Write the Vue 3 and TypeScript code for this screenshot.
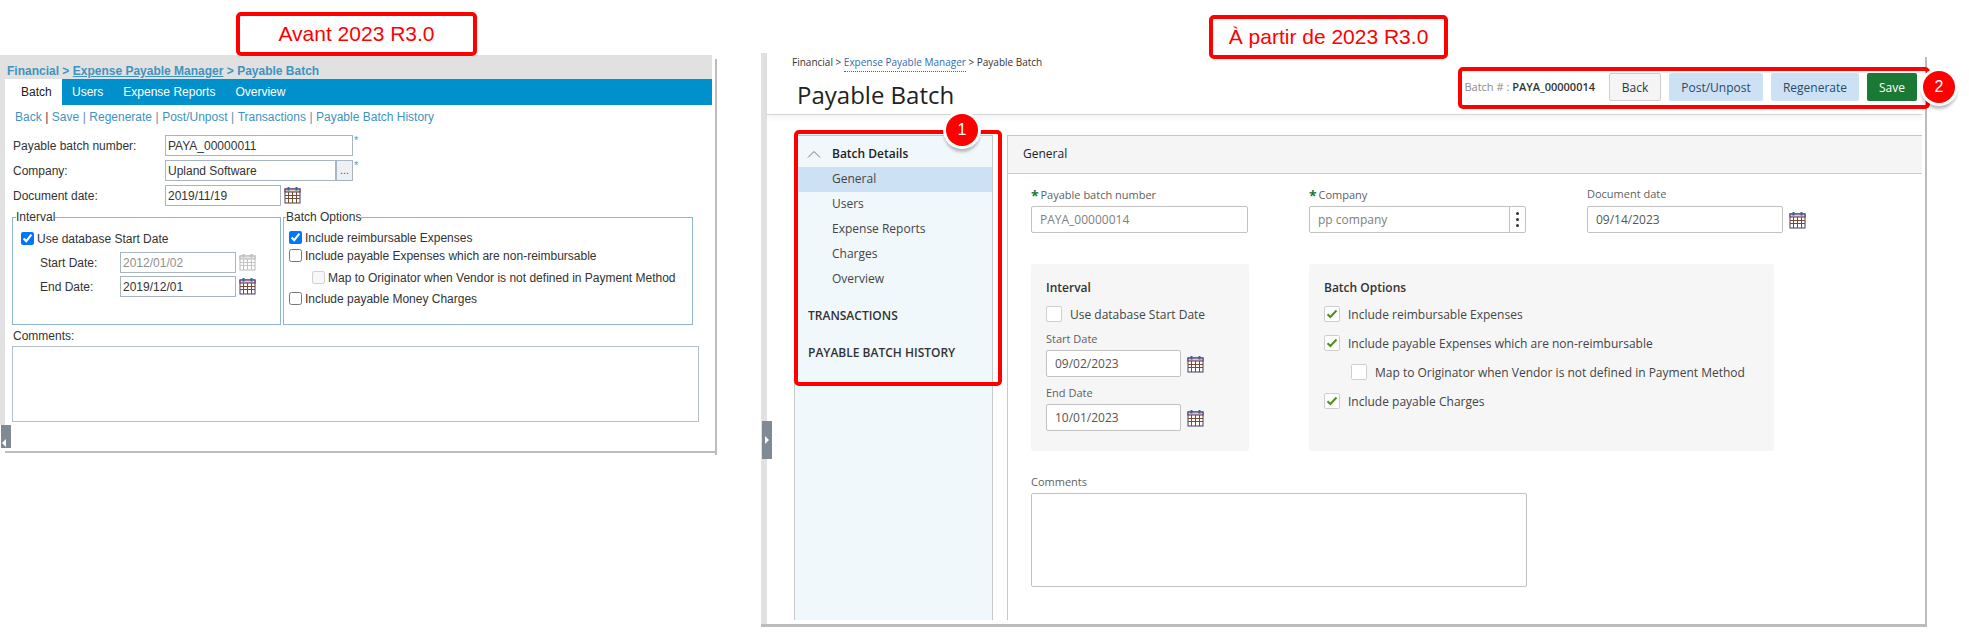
<script setup lang="ts">
const sideItems: string[] = ['General', 'Users', 'Expense Reports', 'Charges', 'Overview']
const oldOptions = [
  { label: 'Include reimbursable Expenses', checked: true },
  { label: 'Include payable Expenses which are non-reimbursable', checked: false },
]
const newOptions = [
  { label: 'Include reimbursable Expenses', checked: true, nested: false },
  { label: 'Include payable Expenses which are non-reimbursable', checked: true, nested: false },
  { label: 'Map to Originator when Vendor is not defined in Payment Method', checked: false, nested: true },
  { label: 'Include payable Charges', checked: true, nested: false },
]
</script>

<template>
  <div class="page">
    <svg class="defs" width="0" height="0" aria-hidden="true">
      <symbol id="cal" viewBox="0 0 17 18">
        <rect x="1" y="3" width="15" height="14" fill="#fff" stroke="#4a3a5a" stroke-width="1" />
        <rect x="1" y="3" width="15" height="3" fill="#d8d0c0" stroke="#5a2a6a" stroke-width="1" />
        <path d="M1 9.5H16M1 12.5H16M4.5 6V17M8.5 6V17M12.5 6V17" stroke="#7a4a30" stroke-width="1" fill="none" />
        <rect x="3.5" y="1" width="2" height="3.5" fill="#2a6a9a" />
        <rect x="11.5" y="1" width="2" height="3.5" fill="#2a6a9a" />
      </symbol>
      <symbol id="calgrey" viewBox="0 0 17 18">
        <rect x="1" y="3" width="15" height="14" fill="#fff" stroke="#b8b8b8" stroke-width="1" />
        <rect x="1" y="3" width="15" height="3" fill="#e8e8e8" stroke="#b8b8b8" stroke-width="1" />
        <path d="M1 9.5H16M1 12.5H16M4.5 6V17M8.5 6V17M12.5 6V17" stroke="#c4c4c4" stroke-width="1" fill="none" />
        <rect x="3.5" y="1" width="2" height="3.5" fill="#c0c0c0" />
        <rect x="11.5" y="1" width="2" height="3.5" fill="#c0c0c0" />
      </symbol>
    </svg>

    <!-- Before -->
    <section class="old">
      <div class="old-crumb">
        Financial &gt; <a class="old-crumb-link">Expense Payable Manager</a> &gt; Payable Batch
      </div>
      <div class="old-body">
        <div class="old-strip"></div>
        <div class="old-main">
          <nav class="old-tabs">
            <span class="old-tab active">Batch</span>
            <span class="old-tab">Users</span>
            <span class="old-tab">Expense Reports</span>
            <span class="old-tab">Overview</span>
          </nav>
          <div class="old-links">
            <a>Back</a><i class="dark">|</i><a>Save</a><i>|</i><a>Regenerate</a><i>|</i><a>Post/Unpost</a><i>|</i><a>Transactions</a><i>|</i><a>Payable Batch History</a>
          </div>
          <div class="old-form">
            <div class="old-row">
              <label class="old-label">Payable batch number:</label>
              <div class="old-input w188">PAYA_00000011</div>
              <span class="old-star">*</span>
            </div>
            <div class="old-row">
              <label class="old-label">Company:</label>
              <div class="old-input w171">Upland Software</div>
              <div class="old-more">...</div>
              <span class="old-star">*</span>
            </div>
            <div class="old-row">
              <label class="old-label">Document date:</label>
              <div class="old-input w116">2019/11/19</div>
              <svg class="old-cal"><use href="#cal" /></svg>
            </div>
            <div class="old-sets">
              <fieldset class="old-set interval">
                <legend>Interval</legend>
                <div class="set-in pad8">
                  <div class="old-check first">
                    <input type="checkbox" checked />
                    <span>Use database Start Date</span>
                  </div>
                  <div class="old-date first-date">
                    <label>Start Date:</label>
                    <div class="old-input w116 muted">2012/01/02</div>
                    <svg class="old-cal"><use href="#calgrey" /></svg>
                  </div>
                  <div class="old-date">
                    <label>End Date:</label>
                    <div class="old-input w116">2019/12/01</div>
                    <svg class="old-cal"><use href="#cal" /></svg>
                  </div>
                </div>
              </fieldset>
              <fieldset class="old-set options">
                <legend>Batch Options</legend>
                <div class="set-in pad5">
                  <div class="old-check tight" v-for="o in oldOptions" :key="o.label">
                    <input type="checkbox" :checked="o.checked" />
                    <span>{{ o.label }}</span>
                  </div>
                  <div class="old-check nested">
                    <input type="checkbox" disabled />
                    <span>Map to Originator when Vendor is not defined in Payment Method</span>
                  </div>
                  <div class="old-check last">
                    <input type="checkbox" />
                    <span>Include payable Money Charges</span>
                  </div>
                </div>
              </fieldset>
            </div>
            <div class="old-comments">Comments:</div>
            <textarea class="old-area"></textarea>
          </div>
        </div>
      </div>
      <div class="old-handle"><span></span></div>
    </section>

    <!-- After -->
    <section class="new">
      <div class="new-strip"></div>
      <div class="new-main">
        <header class="new-head">
          <div class="new-head-left">
            <div class="new-crumb">Financial &gt; <a>Expense Payable Manager</a> &gt; Payable Batch</div>
            <h1>Payable Batch</h1>
          </div>
          <div class="toolbar">
            <span class="batch-no">Batch # : <b>PAYA_00000014</b></span>
            <button class="btn plain">Back</button>
            <button class="btn soft b94">Post/Unpost</button>
            <button class="btn soft b88">Regenerate</button>
            <button class="btn save">Save</button>
          </div>
        </header>
        <div class="new-body">
          <aside class="side">
            <div class="side-top">
              <svg class="chev" width="14" height="8" viewBox="0 0 14 8"><path d="M1 7.5L7 1.5L13 7.5" fill="none" stroke="#777" stroke-width="1" /></svg>
              <span>Batch Details</span>
            </div>
            <div v-for="(s, i) in sideItems" :key="s" class="side-item" :class="{ on: i === 0 }">{{ s }}</div>
            <div class="side-cap first">TRANSACTIONS</div>
            <div class="side-cap">PAYABLE BATCH HISTORY</div>
          </aside>
          <div class="content">
            <div class="content-head">General</div>
            <div class="content-form">
              <div class="top-row">
                <div class="cell">
                  <div class="lab"><em>*</em> Payable batch number</div>
                  <div class="inp w217 dim">PAYA_00000014</div>
                </div>
                <div class="cell">
                  <div class="lab"><em>*</em> Company</div>
                  <div class="inp w217 dim split">
                    <span class="split-val">pp company</span>
                    <span class="dots"><i></i><i></i><i></i></span>
                  </div>
                </div>
                <div class="cell">
                  <div class="lab">Document date</div>
                  <div class="with-cal">
                    <div class="inp w196">09/14/2023</div>
                    <svg class="new-cal"><use href="#cal" /></svg>
                  </div>
                </div>
              </div>
              <div class="panels">
                <div class="panel interval-p">
                  <div class="panel-title">Interval</div>
                  <div class="chk">
                    <span class="box"></span>
                    <span class="chk-text">Use database Start Date</span>
                  </div>
                  <div class="lab date-lab">Start Date</div>
                  <div class="with-cal">
                    <div class="inp w135">09/02/2023</div>
                    <svg class="new-cal"><use href="#cal" /></svg>
                  </div>
                  <div class="lab date-lab second">End Date</div>
                  <div class="with-cal">
                    <div class="inp w135">10/01/2023</div>
                    <svg class="new-cal"><use href="#cal" /></svg>
                  </div>
                </div>
                <div class="panel options-p">
                  <div class="panel-title">Batch Options</div>
                  <div class="opt-list">
                    <div v-for="o in newOptions" :key="o.label" class="chk" :class="{ nest: o.nested }">
                      <span class="box">
                        <svg v-if="o.checked" width="12" height="10" viewBox="0 0 12 10"><path d="M1.5 5.2L4.4 8L10.5 1.5" fill="none" stroke="#4f8f1d" stroke-width="2" /></svg>
                      </span>
                      <span class="chk-text">{{ o.label }}</span>
                    </div>
                  </div>
                </div>
              </div>
              <div class="lab comments-lab">Comments</div>
              <textarea class="new-area"></textarea>
            </div>
          </div>
        </div>
      </div>
      <div class="new-handle"><span></span></div>
    </section>

    <!-- Annotations laid over the screenshots -->
    <div class="note note-a">Avant 2023 R3.0</div>
    <div class="note note-b">À partir de 2023 R3.0</div>
    <div class="mark mark-side"></div>
    <div class="mark mark-tools"></div>
    <div class="badge badge-1">1</div>
    <div class="badge badge-2">2</div>
  </div>
</template>

<style>
html, body { margin: 0; background: #fff; }
</style>

<style scoped>
* { box-sizing: border-box; }
.page {
  position: relative;
  width: 1969px;
  height: 638px;
  overflow: hidden;
  background: #fff;
  display: flex;
  align-items: flex-start;
}
.defs { position: absolute; }

/* ---------- old ---------- */
.old {
  position: relative;
  width: 718px;
  height: 400px;
  margin-top: 55px;
  font: 12px/14px "Liberation Sans", Arial, sans-serif;
  color: #333;
  flex: none;
}
.old::after {
  content: "";
  position: absolute;
  right: 1px;
  top: 4px;
  bottom: 0;
  width: 2px;
  background: #bcbcbc;
}
.old-crumb {
  width: 712px;
  height: 24px;
  background: #e1e1e1;
  padding: 9px 0 0 7px;
  font-weight: 700;
  color: #3f93c0;
  white-space: nowrap;
}
.old-crumb-link { text-decoration: underline; }
.old-body { display: flex; height: 374px; margin-right: 1px; border-bottom: 2px solid #bcbcbc; margin-left: 5px; }
.old-strip { position: absolute; left: 0; top: 24px; width: 5px; height: 346px; background: #e1e1e1; }
.old-main { flex: 1; min-width: 0; }
.old-tabs {
  width: 707px;
  height: 26px;
  background: #0090cb;
  display: flex;
  color: #fff;
}
.old-tab { padding: 6px 0 0 0; margin-right: 20px; }
.old-tab.active {
  background: #fff;
  color: #222;
  width: 57px;
  padding-left: 16px;
  margin-right: 10px;
}
.old-links {
  height: 30px;
  padding: 5px 0 0 10px;
  color: #3f93c0;
  white-space: nowrap;
}
.old-links i { font-style: normal; color: #6a8fa8; margin: 0 3.5px; }
.old-links i.dark { color: #444; }
.old-form { padding-left: 7px; }
.old-row { display: flex; height: 21px; margin-bottom: 4px; align-items: flex-start; }
.old-label { width: 152px; padding-top: 4px; flex: none; margin-left: 1px; }
.old-input {
  height: 21px;
  border: 1px solid #a9b5c0;
  padding: 3px 0 0 2px;
  flex: none;
  background: #fff;
  color: #333;
  white-space: nowrap;
}
.w188 { width: 188px; }
.w171 { width: 171px; }
.w116 { width: 116px; }
.muted { color: #909090; }
.old-more {
  width: 17px;
  height: 21px;
  border: 1px solid #a9b5c0;
  background: #eef1f4;
  text-align: center;
  font-size: 11px;
  line-height: 18px;
  color: #555;
}
.old-star { color: #4a9fd0; font-size: 11px; line-height: 11px; margin-left: 1px; }
.old-cal { width: 17px; height: 18px; margin-left: 3px; margin-top: 1px; flex: none; }
.old-sets { display: flex; margin-top: 2px; gap: 2px; }
.old-set {
  margin: 0;
  padding: 0;
  height: 115px;
  border: 1px solid #8fb6d0;
  min-width: 0;
  position: relative;
}
.old-set legend { padding: 0; line-height: 14px; }
.interval { width: 269px; }
.interval legend { margin-left: 3px; }
.options { width: 410px; }
.options legend { margin-left: 2px; }
.pad8 { padding-left: 8px; }
.pad5 { padding-left: 5px; }
.old-check { display: flex; align-items: center; height: 14px; white-space: nowrap; }
.old-check input { margin: 0 3px 0 0; width: 13px; height: 13px; flex: none; }
.old-check span { position: relative; top: 1px; }
.old-check.first { margin-top: 7px; }
.old-check.tight { margin-bottom: 4px; }
.old-check.tight:first-of-type { margin-top: 6px; }
.old-check.nested { margin: 8px 0 7px 23px; }
.old-date { display: flex; height: 21px; margin-top: 3px; padding-left: 18px; }
.old-date label { width: 80px; padding-top: 4px; flex: none; margin-left: 1px; }
.first-date { margin-top: 7px; }
.old-comments { margin-top: 4px; padding-left: 1px; height: 17px; }
.old-area {
  display: block;
  width: 687px;
  height: 76px;
  border: 1px solid #b4c0ca;
  border-radius: 0;
  padding: 0;
  resize: none;
  outline: none;
}
.old-handle {
  position: absolute;
  left: 1px;
  top: 370px;
  width: 10px;
  height: 23px;
  background: #808a94;
}
.old-handle span {
  position: absolute;
  left: 1px;
  top: 14px;
  border-style: solid;
  border-width: 4px 4px 4px 0;
  border-color: transparent #fff transparent transparent;
}

/* ---------- new ---------- */
.new {
  position: relative;
  display: flex;
  width: 1166px;
  height: 574px;
  margin: 53px 0 0 43px;
  border-bottom: 3px solid #bcbcbc;
  font: 12px/16px "Open Sans", sans-serif;
  color: #333;
  flex: none;
}
.new::after {
  content: "";
  position: absolute;
  right: 0;
  top: 4px;
  bottom: 0;
  width: 2px;
  background: #bcbcbc;
}
.new-strip { width: 6px; background: #e1e1e1; flex: none; }
.new-main { flex: 1; min-width: 0; margin-right: 5px; display: flex; flex-direction: column; }
.new-head {
  height: 62px;
  display: flex;
  justify-content: space-between;
  align-items: flex-start;
  padding: 20px 5px 0 25px;
  border-bottom: 1px solid #d4d4d4;
  box-shadow: 0 3px 6px rgba(0, 0, 0, .05);
  position: relative;
}
.new-head-left { margin-top: -18px; }
.new-crumb { font-size: 10px; line-height: 14px; color: #333; white-space: nowrap; }
.new-crumb a { color: #2f6db0; border-bottom: 1px dotted #2f6db0; padding-bottom: 2px; }
h1 {
  margin: 10px 0 0 5px;
  font-size: 24px;
  font-weight: 400;
  line-height: 32px;
  color: #222;
}
.toolbar { display: flex; align-items: center; gap: 8px; height: 28px; }
.batch-no { font-size: 11px; color: #8a8a8a; margin-right: 6px; white-space: nowrap; }
.batch-no b { color: #333; font-weight: 600; }
.btn {
  height: 28px;
  border: 0;
  border-radius: 2px;
  font: 12px "Open Sans", sans-serif;
  padding: 0;
}
.plain { width: 52px; background: #f5f5f5; border: 1px solid #cfcfcf; color: #333; }
.soft { background: #cde1f5; color: #2b4a66; }
.b94 { width: 94px; }
.b88 { width: 88px; }
.save { width: 50px; background: #1a7a35; color: #fff; }
.new-body { flex: 1; display: flex; padding: 20px 0 0 27px; min-height: 0; }
.side {
  width: 199px;
  flex: none;
  background: #f1f8fc;
  border: 1px solid #c8c8c8;
  border-bottom: 0;
  margin-bottom: 4px;
}
.side-top {
  height: 31px;
  display: flex;
  align-items: center;
  padding: 4px 0 0 12px;
  font-weight: 600;
  color: #222;
}
.chev { margin-right: 11px; flex: none; }
.side-item { height: 25px; line-height: 24px; padding-left: 37px; color: #444; }
.side-item.on { background: #cde1f5; }
.side-cap { height: 37px; line-height: 36px; padding-left: 13px; font-weight: 600; color: #333; white-space: nowrap; }
.side-cap.first { margin-top: 6px; }
.content {
  flex: 1;
  margin-left: 14px;
  min-width: 0;
  border-left: 1px solid #c8c8c8;
  border-top: 1px solid #c8c8c8;
  margin-bottom: 4px;
}
.content-head {
  height: 38px;
  line-height: 36px;
  background: #f5f5f5;
  border-bottom: 1px solid #ccc;
  padding-left: 15px;
  font-weight: 500;
  color: #222;
}
.content-form { padding: 13px 0 0 23px; }
.top-row { display: grid; grid-template-columns: repeat(3, 278px); }
.lab { font-size: 11px; line-height: 14px; color: #5f5f5f; height: 16px; margin-bottom: 3px; white-space: nowrap; }
.lab em { color: #1a7a35; font-style: normal; font-weight: 700; font-size: 14px; line-height: 14px; margin-right: -1px; position: relative; top: 2px; }
.inp {
  height: 27px;
  border: 1px solid #c2c2c2;
  border-radius: 2px;
  background: #fff;
  padding: 0 8px;
  line-height: 26px;
  color: #555;
  flex: none;
  white-space: nowrap;
}
.dim { color: #808080; }
.w217 { width: 217px; }
.w196 { width: 196px; }
.w135 { width: 135px; }
.split { display: flex; padding-right: 0; }
.split-val { flex: 1; }
.dots {
  width: 16px;
  border-left: 1px solid #c2c2c2;
  display: flex;
  flex-direction: column;
  align-items: center;
  justify-content: center;
  gap: 3px;
}
.dots i { width: 3px; height: 3px; background: #333; border-radius: 50%; display: block; }
.with-cal { display: flex; align-items: center; }
.new-cal { width: 17px; height: 18px; margin-left: 6px; flex: none; }
.panels { display: flex; gap: 60px; margin-top: 31px; }
.panel { height: 187px; background: #f6f6f6; border-radius: 3px; padding: 16px 0 0 15px; }
.interval-p { width: 218px; }
.options-p { width: 465px; }
.panel-title { font-weight: 600; color: #333; height: 16px; margin-bottom: 10px; }
.chk { display: flex; align-items: center; height: 16px; color: #444; white-space: nowrap; }
.chk-text { position: relative; top: 1px; }
.box {
  width: 16px;
  height: 16px;
  background: #fff;
  border: 1px solid #cfcfcf;
  border-radius: 2px;
  margin-right: 8px;
  display: flex;
  align-items: center;
  justify-content: center;
  flex: none;
}
.opt-list { display: flex; flex-direction: column; gap: 13px; }
.nest { padding-left: 27px; }
.date-lab { margin: 10px 0 4px; height: 14px; }
.date-lab.second { margin-top: 9px; }
.comments-lab { margin: 24px 0 4px; height: 14px; }
.new-area {
  display: block;
  width: 496px;
  height: 94px;
  border: 1px solid #c2c2c2;
  border-radius: 2px;
  resize: none;
  outline: none;
  padding: 0;
}
.new-handle {
  position: absolute;
  left: 1px;
  top: 368px;
  width: 10px;
  height: 38px;
  background: #808a94;
}
.new-handle span {
  position: absolute;
  left: 3px;
  top: 15px;
  border-style: solid;
  border-width: 4px 0 4px 4px;
  border-color: transparent transparent transparent #fff;
}

/* ---------- annotations ---------- */
.note {
  position: absolute;
  border: 4px solid #f00;
  border-radius: 5px;
  background: #fff;
  color: #f00;
  font: 21px "Liberation Sans", Arial, sans-serif;
  display: flex;
  align-items: center;
  justify-content: center;
  white-space: nowrap;
}
.note-a { left: 236px; top: 12px; width: 241px; height: 44px; }
.note-b { left: 1209px; top: 15px; width: 239px; height: 44px; }
.mark { position: absolute; border: 4px solid #f00; border-radius: 5px; }
.mark-side { left: 794px; top: 130px; width: 208px; height: 256px; }
.mark-tools { left: 1458px; top: 67px; width: 472px; height: 42px; }
.badge {
  position: absolute;
  width: 32px;
  height: 32px;
  border-radius: 50%;
  background: #f00;
  color: #fff;
  font: 16px/32px "Liberation Sans", Arial, sans-serif;
  text-align: center;
  box-shadow: 0 0 0 3px #fff, 0 4px 3px 2px rgba(0, 0, 0, .25);
}
.badge-1 { left: 946px; top: 114px; }
.badge-2 { left: 1923px; top: 71px; }
</style>
